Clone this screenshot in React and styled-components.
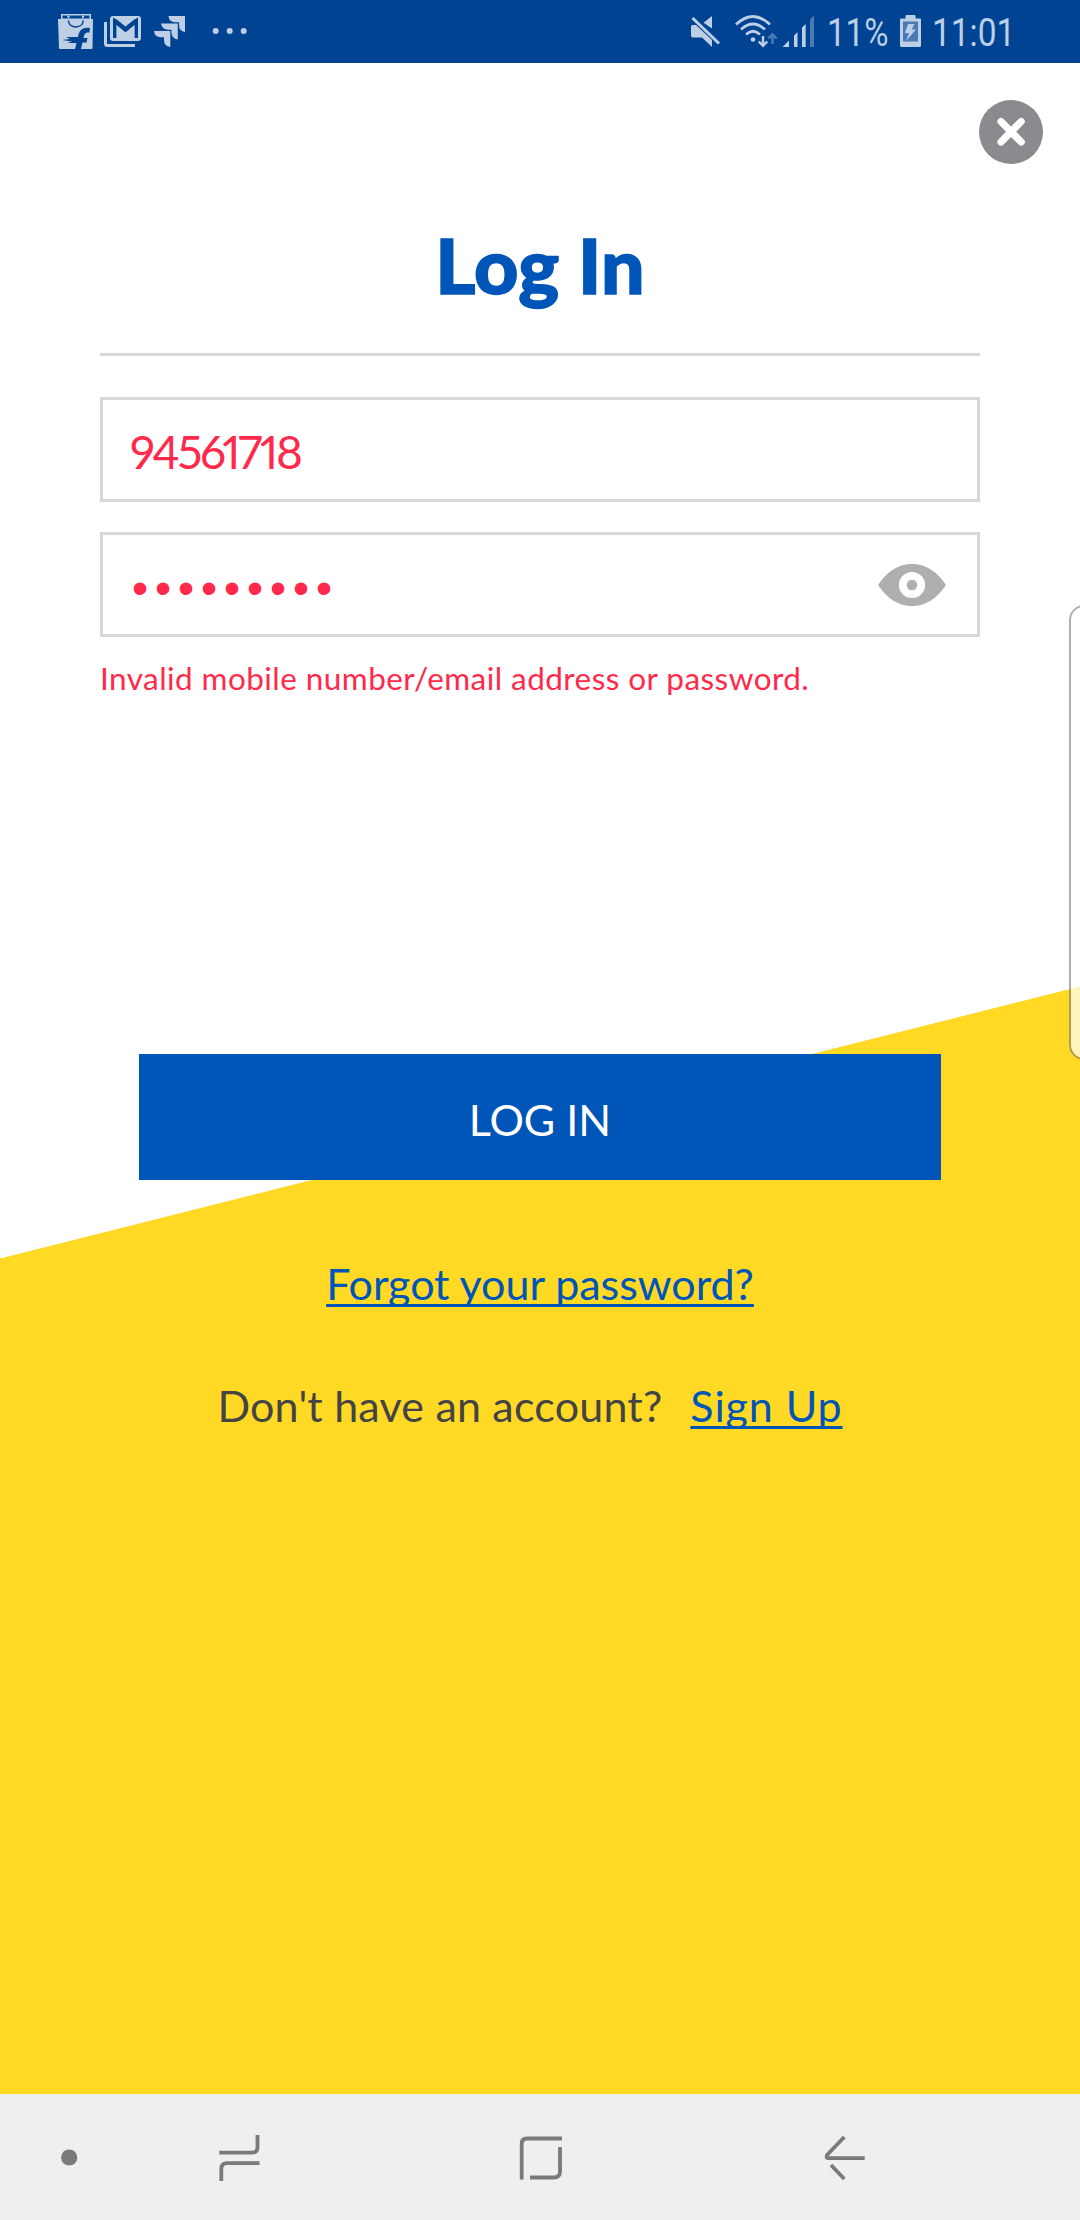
import React from "react";
import styled, { createGlobalStyle } from "styled-components";

const color = {
  statusBar: "#004392",
  statusIcon: "#bccfe4",
  blue: "#0055b8",
  yellow: "#ffd924",
  line: "#d8d8d8",
  error: "#ff2a4b",
  text: "#444444",
  nav: "#efefef",
  navIcon: "#7a7a7a",
};

const GlobalStyle = createGlobalStyle`
  * { box-sizing: border-box; }
  body { margin: 0; background: #fff; font-family: Lato, "Liberation Sans", sans-serif; }
`;

const Screen = styled.div`
  position: relative;
  width: 1080px;
  height: 2220px;
  display: flex;
  flex-direction: column;
  overflow: hidden;
`;

const StatusBar = styled.header`
  height: 63px;
  flex: none;
  display: flex;
  justify-content: space-between;
  padding: 0 65px 0 58px;
  background: ${color.statusBar};
  color: ${color.statusIcon};
`;

const StatusGroup = styled.div`
  display: flex;
  align-items: flex-start;
`;

const Icon = styled.svg`
  display: block;
  flex: none;
  margin: ${(p) => p.$margin || "0"};
`;

const StatusText = styled.span`
  width: ${(p) => p.$width}px;
  margin-left: ${(p) => p.$gap}px;
  font: 400 38px/63px Roboto, sans-serif;
  padding-top: 2px;
  white-space: nowrap;
  transform: scaleX(${(p) => p.$scale});
  transform-origin: left;
`;

const Main = styled.main`
  flex: 1;
  display: flex;
  flex-direction: column;
  padding: 37px 100px 0;
  background:
    linear-gradient(to bottom right, transparent 50%, ${color.yellow} calc(50% + 1px)) 0 923px / 1080px 272px no-repeat,
    linear-gradient(${color.yellow}, ${color.yellow}) 0 1195px / 100% 100% no-repeat,
    #fff;
`;

const CloseButton = styled.button`
  align-self: flex-end;
  width: 64px;
  height: 64px;
  margin-right: -63px;
  padding: 0;
  border: 0;
  background: none;
`;

const Title = styled.h1`
  margin: 60px 0 0;
  height: 129px;
  border-bottom: 3px solid ${color.line};
  box-sizing: content-box;
  text-align: center;
  font-size: 77px;
  font-weight: 900;
  line-height: 80px;
  letter-spacing: 0.2px;
  color: ${color.blue};
  -webkit-text-stroke: 1.5px ${color.blue};
`;

const Form = styled.form`
  display: flex;
  flex-direction: column;
`;

const Field = styled.div`
  display: flex;
  align-items: center;
  justify-content: space-between;
  height: 105px;
  margin-top: ${(p) => p.$gap}px;
  padding: 0 31px 0 27px;
  border: 3px solid ${color.line};
  background: #fff;
  color: ${color.error};
`;

const FieldValue = styled.span`
  padding-top: 4px;
  font-size: 46px;
  line-height: 60px;
  letter-spacing: -2.4px;
  font-feature-settings: "pnum";
`;

const Mask = styled.span`
  padding: 6px 0 0 2px;
  font: 46px/60px "Liberation Sans", sans-serif;
  letter-spacing: 6.9px;
`;

const ErrorText = styled.p`
  margin: 21px 0 0;
  font-size: 31.5px;
  line-height: 40px;
  letter-spacing: 0.44px;
  white-space: nowrap;
  color: ${color.error};
`;

const SubmitButton = styled.button`
  width: 802px;
  height: 126px;
  margin: 356px auto 0;
  padding: 5px 0 0;
  border: 0;
  background: ${color.blue};
  color: #fff;
  font-family: inherit;
  font-size: 43px;
  letter-spacing: 0;
`;

const Row = styled.div`
  display: flex;
  justify-content: center;
  gap: 28px;
  margin-top: ${(p) => p.$gap}px;
  padding-right: ${(p) => p.$shift || 0}px;
  font-size: 43px;
  line-height: 50px;
  white-space: nowrap;
  color: ${color.text};
`;

const Prompt = styled.span`
  letter-spacing: 0.2px;
`;

const Link = styled.a`
  color: ${color.blue};
  letter-spacing: ${(p) => p.$spacing || 0}px;
  text-decoration: underline;
  text-decoration-thickness: 3px;
  text-underline-offset: 4px;
  text-decoration-skip-ink: none;
`;

const NavBar = styled.nav`
  height: 126px;
  flex: none;
  display: flex;
  align-items: flex-start;
  padding-left: 61px;
  background: ${color.nav};
  color: ${color.navIcon};
`;

const EdgePanel = styled.aside`
  position: absolute;
  top: 605px;
  right: -20px;
  width: 31px;
  height: 455px;
  border: 2px solid rgba(110, 110, 110, 0.55);
  border-radius: 15px;
  background: rgba(255, 255, 255, 0.7);
  background-clip: padding-box;
`;

const ShopIcon = () => (
  <Icon width="35" height="35" viewBox="58 14 35 35" $margin="14px 0 0">
    <path fill="currentColor" d="M61 14H91V19H93L92.5 48Q92.5 49 91.500 49H60Q59 49 59 48L58 19H61Z" />
    <path fill={color.statusBar} d="M62.500 15.500H89.500V18.500H62.500Z" />
    <circle cx="68.500" cy="16.800" r="1.200" fill="currentColor" />
    <circle cx="83" cy="16.800" r="1.200" fill="currentColor" />
    <path d="M68.500 20.500C69 29 83 29 83.200 20.500" fill="none" stroke={color.statusBar} strokeWidth="1.500" />
    <path fill={color.statusBar} d="M90 28C83 27 79 30 78 37H66L70 39L62 40L72 41.500L67 43H76.500L75 49H81L82.500 42.500H86.500L87.500 38H83.500C84 34 85.500 32 89.300 32.500Z" />
  </Icon>
);

const MailIcon = () => (
  <Icon width="38" height="32" viewBox="104 16 38 32" $margin="16px 0 0 11px">
    <path d="M105.500 22V43.500Q105.500 45.500 107.500 45.500H135" fill="none" stroke="currentColor" strokeWidth="3" />
    <rect x="110" y="16" width="31" height="25" rx="3" fill="currentColor" />
    <path d="M114.700 38V21L125.500 30L136.300 21V38" fill="none" stroke={color.statusBar} strokeWidth="3.400" />
    <path d="M113 19H116L125.500 26.500L135 19H138V22L125.500 32L113 22Z" fill={color.statusBar} />
  </Icon>
);

const JiraIcon = () => (
  <Icon width="31" height="31" viewBox="154 16 31 31" $margin="16px 0 0 12px">
    <g fill="currentColor">
      <path d="M168.500 16H185V32Q179 31 179 25V22.300H175Q169 22 168.500 16Z" />
      <path d="M161 23.500H177.800V39.500Q171.500 38.500 171.500 32.500V29.800H168Q162 29.500 161 23.500Z" />
      <path d="M154 31H170.300V47Q164 46 164 40V37.300H160.500Q154.500 37 154 31Z" />
    </g>
  </Icon>
);

const MoreIcon = () => (
  <Icon width="36" height="8" viewBox="212 27 36 8" $margin="27px 0 0 27px">
    {[215.7, 229.7, 243.7].map((x) => (
      <circle key={x} cx={x} cy="31" r="3" fill="currentColor" />
    ))}
  </Icon>
);

const MuteIcon = () => (
  <Icon width="31" height="32" viewBox="690 16 31 32" $margin="16px 0 0">
    <path fill="currentColor" d="M712 16V28.500L703.500 22.800ZM691.500 25H696L712 40V47L702 37.500H692.500Q691 37.500 691 35.500V27Q691 25 692.500 25Z" />
    <path d="M692.500 18L719 43.500" stroke="currentColor" strokeWidth="3" />
  </Icon>
);

const WifiIcon = () => (
  <Icon width="43" height="34" viewBox="735 14 43 34" $margin="14px 0 0 14px">
    <g fill="none" stroke="currentColor" strokeWidth="2.700">
      <path d="M736 24.500Q753 8.500 770 24.500" />
      <path d="M741 29.500Q753 18.500 765 29.500" />
      <path d="M746 34.500Q753 28 760 34.500" />
    </g>
    <circle cx="753" cy="39.500" r="2.300" fill="currentColor" />
    <path d="M763 36V45.500M758.700 41.500L763 45.700L767.300 41.500" fill="none" stroke="currentColor" strokeWidth="2.400" />
    <path d="M772.500 44V34M768.300 38.500L772.500 34.300L776.700 38.500" fill="none" stroke="currentColor" strokeWidth="2.400" opacity=".4" />
  </Icon>
);

const SignalIcon = () => (
  <Icon width="33" height="32" viewBox="782 16 33 32" $margin="16px 0 0 4px">
    <path fill="currentColor" d="M782.500 47L789 40.500V47ZM794 47V35.500L797.500 32V47ZM802 47V27.500L805.700 24V47Z" />
    <path fill="currentColor" opacity=".4" d="M810 47V19.500L814 15.500V47Z" />
  </Icon>
);

const BatteryIcon = () => (
  <Icon width="21" height="32" viewBox="900 15.500 21 32" $margin="15px 0 0">
    <path fill="currentColor" d="M906.500 15.500H914.500Q915.500 15.500 915.500 16.500V19H920Q921 19 921 20V46Q921 47.500 919.500 47.500H901.500Q900 47.500 900 46V20Q900 19 901 19H905.500V16.500Q905.500 15.500 906.500 15.500Z" />
    <rect x="903" y="22" width="15" height="20" fill="#4a79b4" />
    <path fill="currentColor" d="M908 24.500H914.500L911.700 30H916L906 41.500L909 33.500H904.800Z" />
  </Icon>
);

const CloseIcon = () => (
  <Icon width="64" height="64" viewBox="979 100 64 64">
    <circle cx="1011" cy="132" r="32" fill="#8b8a8f" />
    <path d="M1001 121.500L1021.200 142M1021.200 121.500L1001 142" stroke="#fff" strokeWidth="7.200" strokeLinecap="round" />
  </Icon>
);

const EyeIcon = () => (
  <Icon width="68" height="42" viewBox="878 564 68 42">
    <path fill="#afafaf" d="M878 585Q892 564 912 564T946 585Q932 606 912 606T878 585Z" />
    <circle cx="912" cy="585" r="13.100" fill="#fff" />
    <circle cx="912" cy="585" r="5.300" fill="#afafaf" />
  </Icon>
);

const DotIcon = () => (
  <Icon width="17" height="17" viewBox="61 2149.500 17 17" $margin="55px 0 0">
    <circle cx="69.200" cy="2158" r="8.100" fill="currentColor" />
  </Icon>
);

const RecentsIcon = () => (
  <Icon width="42" height="47" viewBox="219 2135 42 47" $margin="41px 0 0 141px" fill="none" stroke="currentColor" strokeWidth="3.800">
    <path d="M257.500 2135V2147.500Q257.500 2152.700 252 2152.700H219.300M221.300 2181V2169Q221.300 2163.200 227 2163.200H259.500" />
  </Icon>
);

const HomeIcon = () => (
  <Icon width="44" height="45" viewBox="519 2136 44 45" $margin="42px 0 0 258px" fill="none" stroke="currentColor" strokeWidth="3.800">
    <path d="M521.700 2179.500V2144Q521.700 2138.500 527 2138.500H562M560 2147V2171.500Q560 2177.500 554 2177.500H530" />
  </Icon>
);

const BackIcon = () => (
  <Icon width="42" height="46" viewBox="824 2135 42 46" $margin="41px 0 0 261px" fill="none" stroke="currentColor" strokeWidth="3.800">
    <path d="M844.300 2137L827 2155Q825.500 2158.200 828.500 2158.200H864.700M831 2165L844.300 2179" />
  </Icon>
);

export default function App() {
  return (
    <Screen>
      <GlobalStyle />
      <StatusBar>
        <StatusGroup>
          <ShopIcon />
          <MailIcon />
          <JiraIcon />
          <MoreIcon />
        </StatusGroup>
        <StatusGroup>
          <MuteIcon />
          <WifiIcon />
          <SignalIcon />
          <StatusText $gap={12} $width={73} $scale={0.87}>11%</StatusText>
          <BatteryIcon />
          <StatusText $gap={11} $width={83} $scale={0.88}>11:01</StatusText>
        </StatusGroup>
      </StatusBar>
      <Main>
        <CloseButton type="button" aria-label="Close">
          <CloseIcon />
        </CloseButton>
        <Title>Log In</Title>
        <Form>
          <Field $gap={41}>
            <FieldValue>94561718</FieldValue>
          </Field>
          <Field $gap={30}>
            <Mask>•••••••••</Mask>
            <EyeIcon />
          </Field>
          <ErrorText>Invalid mobile number/email address or password.</ErrorText>
          <SubmitButton type="button">LOG IN</SubmitButton>
        </Form>
        <Row $gap={79}>
          <Link>Forgot your password?</Link>
        </Row>
        <Row $gap={72} $shift={20}>
          <Prompt>Don't have an account?</Prompt>
          <Link $spacing={0.9}>Sign Up</Link>
        </Row>
      </Main>
      <NavBar>
        <DotIcon />
        <RecentsIcon />
        <HomeIcon />
        <BackIcon />
      </NavBar>
      <EdgePanel />
    </Screen>
  );
}
